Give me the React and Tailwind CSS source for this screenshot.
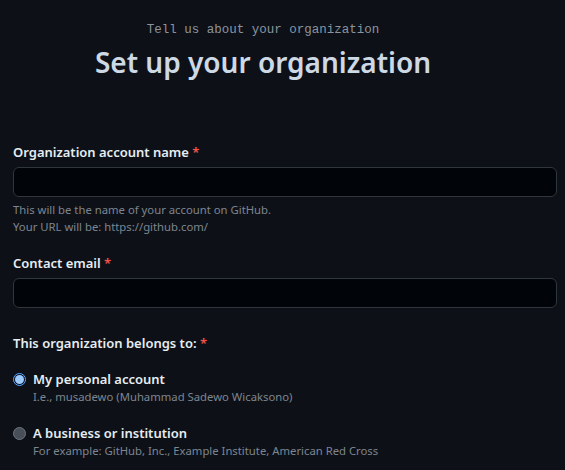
import React, { useState } from 'react';

function Radio({ checked, onClick }) {
    return (
        <button
            onClick={onClick}
            className={`mt-[4px] w-[13px] h-[13px] rounded-full flex-shrink-0 flex items-center justify-center border ${checked ? 'border-[#58a6ff] bg-[#0d1117]' : 'border-[#6e7681] bg-[#484f58]'}`}
        >
            {checked && <span className="w-[9px] h-[9px] rounded-full bg-[#9ecbff]"></span>}
        </button>
    );
}

export default function App() {
    const [owner, setOwner] = useState('personal');
    const sans = { fontFamily: '"Noto Sans", "Open Sans", sans-serif' };

    return (
        <div className="min-h-screen w-full bg-[#0d1117] text-[#e6edf3] overflow-hidden" style={sans}>
            <div className="pr-[39px] pt-[20px] text-center">
                <p className="text-[12.5px] leading-[20px] text-[#8b949e]" style={{ fontFamily: '"Liberation Mono", "DejaVu Sans Mono", monospace' }}>
                    Tell us about your organization
                </p>
                <h1 className="mt-[2px] text-[28px] leading-[40px] font-semibold text-[#cdd9e5]">Set up your organization</h1>
            </div>

            <div className="pl-[13px] pr-[8px] pt-[60px]">
                <label className="block text-[13px] leading-[20px] font-semibold">
                    Organization account name <span className="text-[#f85149]">*</span>
                </label>
                <input className="mt-[5px] block w-full h-[30px] rounded-[6px] border border-[#30363d] bg-[#010409] px-3 text-sm text-[#e6edf3] outline-none" />
                <p className="mt-[4px] text-[11.3px] leading-[17px] text-[#7d8590]">
                    This will be the name of your account on GitHub.<br />
                    Your URL will be: https://github.com/
                </p>

                <label className="mt-[18px] block text-[13px] leading-[20px] font-semibold">
                    Contact email <span className="text-[#f85149]">*</span>
                </label>
                <input className="mt-[5px] block w-full h-[30px] rounded-[6px] border border-[#30363d] bg-[#010409] px-3 text-sm text-[#e6edf3] outline-none" />

                <p className="mt-[25px] text-[13px] leading-[20px] font-semibold">
                    This organization belongs to: <span className="text-[#f85149]">*</span>
                </p>

                <div className="mt-[16px] flex gap-[7px]">
                    <Radio checked={owner === 'personal'} onClick={() => setOwner('personal')} />
                    <div>
                        <div className="text-[13px] leading-[20px] font-semibold">My personal account</div>
                        <div className="text-[11.3px] leading-[16px] text-[#7d8590]">I.e., musadewo (Muhammad Sadewo Wicaksono)</div>
                    </div>
                </div>

                <div className="mt-[18px] flex gap-[7px]">
                    <Radio checked={owner === 'business'} onClick={() => setOwner('business')} />
                    <div>
                        <div className="text-[13px] leading-[20px] font-semibold">A business or institution</div>
                        <div className="text-[11.3px] leading-[16px] text-[#7d8590]">For example: GitHub, Inc., Example Institute, American Red Cross</div>
                    </div>
                </div>
            </div>
        </div>
    );
}
